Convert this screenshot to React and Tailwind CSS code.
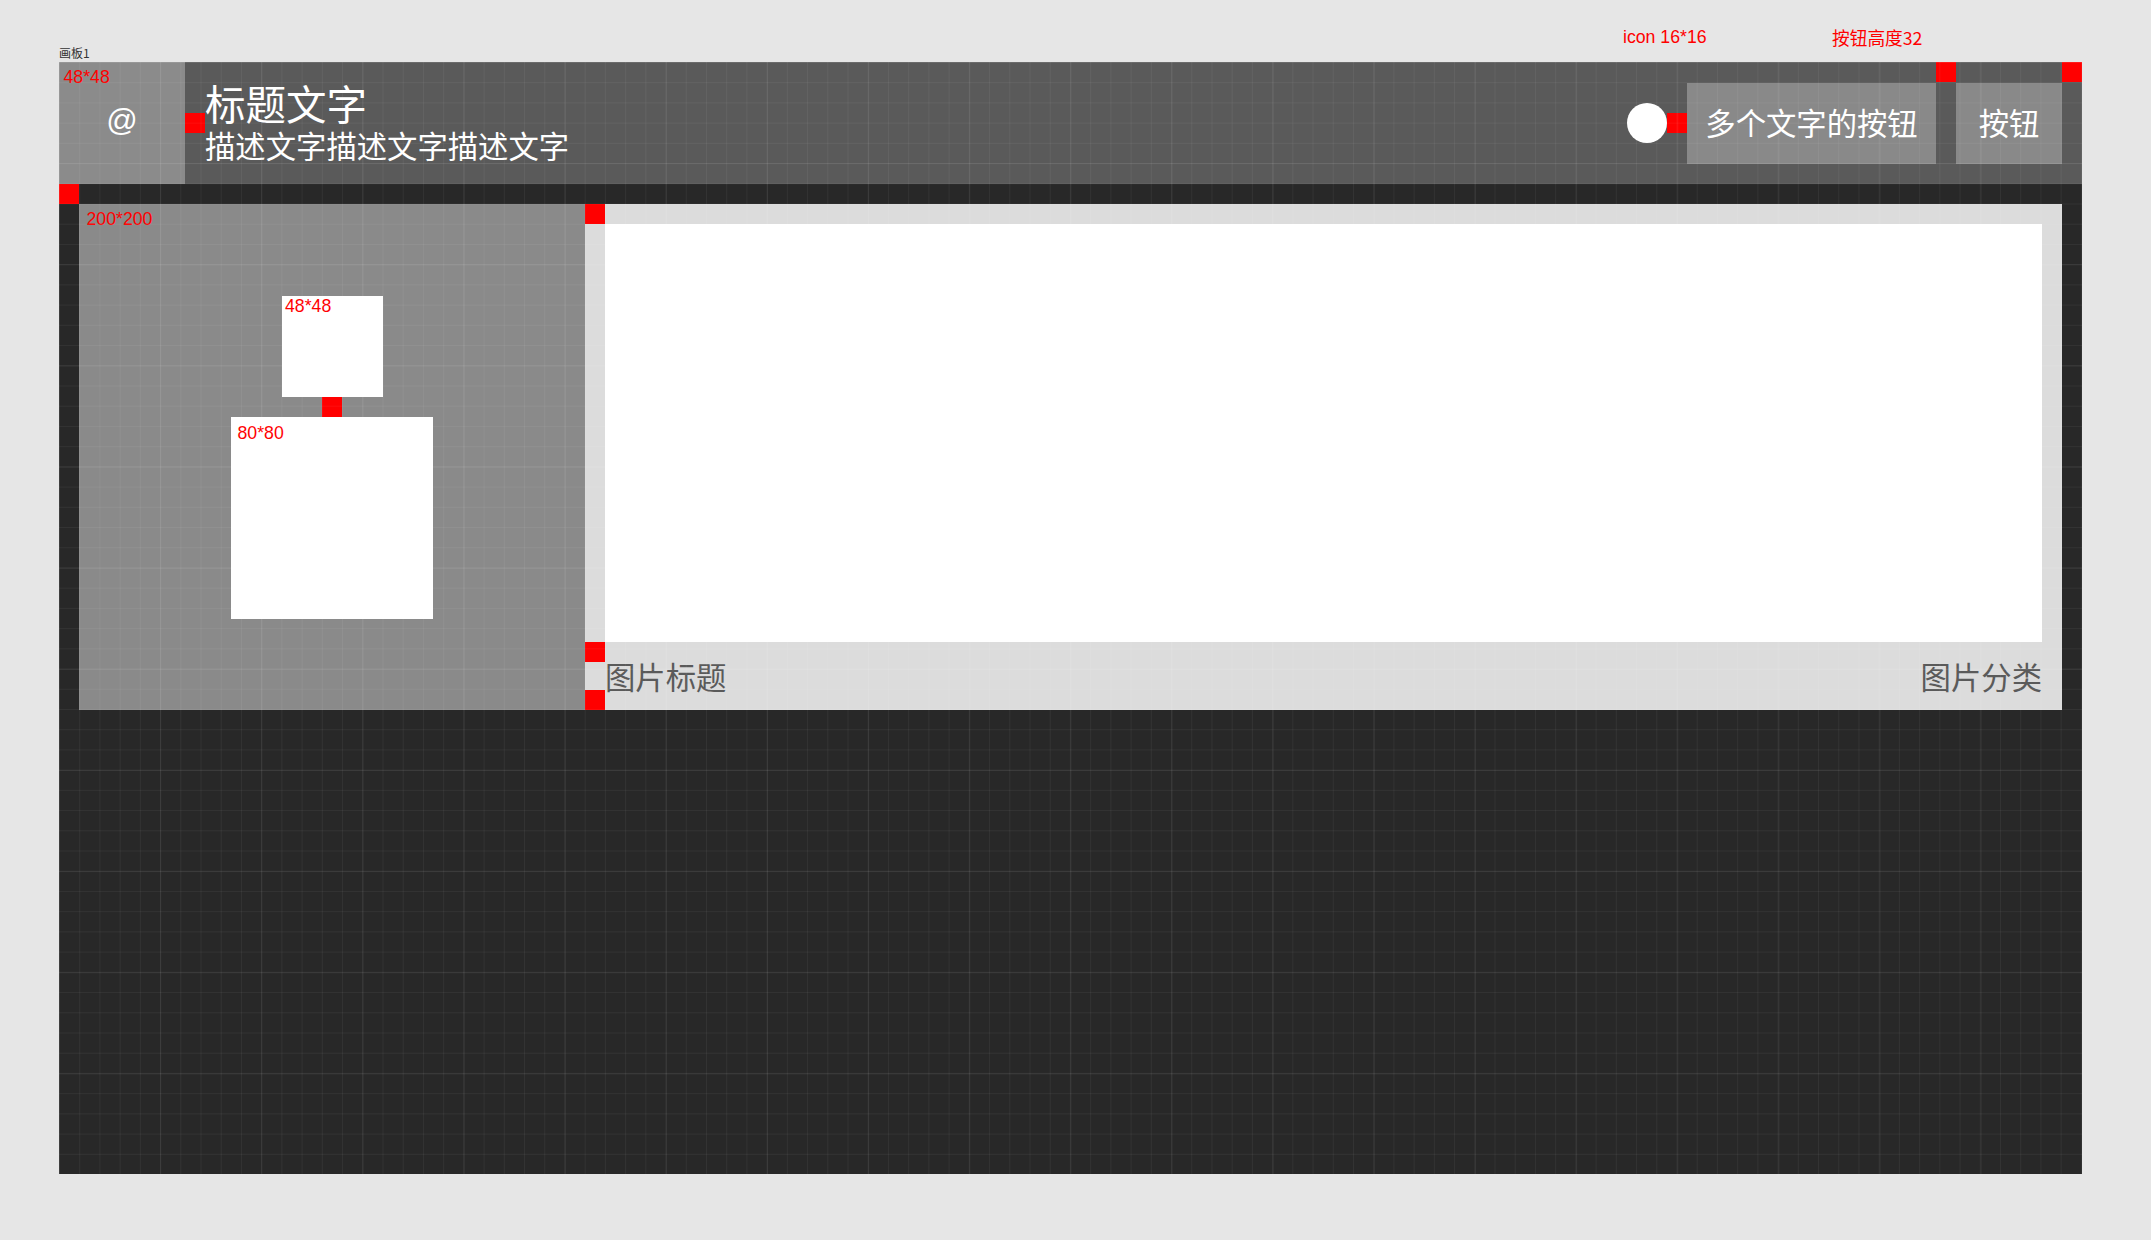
const cjk = "font-['Noto_Sans_CJK_SC',sans-serif]";
const latin = "font-['Liberation_Sans','Noto_Sans_CJK_SC',sans-serif]";

function Spacer({ className = "" }) {
  return <div className={`h-[20px] w-[20px] shrink-0 bg-[#ff0000] ${className}`} />;
}

function SizeLabel({ children, className = "" }) {
  return (
    <span className={`absolute text-[17.7px] leading-[20px] text-[#ff0000] ${latin} ${className}`}>
      {children}
    </span>
  );
}

function Header() {
  return (
    <div className="flex h-[122px] shrink-0 items-center bg-[#5a5a5a]">
      <div className="relative flex h-full w-[126px] shrink-0 items-center justify-center bg-[#8b8b8b]">
        <SizeLabel className="left-[4.5px] top-[4.6px]">48*48</SizeLabel>
        <span className={`-mt-[5px] text-[31px] leading-[31px] text-white ${latin}`}>@</span>
      </div>
      <Spacer />
      <div className={`mb-[2px] flex flex-col text-white ${cjk}`}>
        <div className="text-[40.5px] leading-[44px]">标题文字</div>
        <div className="pt-[2px] text-[30.35px] leading-[36px]">描述文字描述文字描述文字</div>
      </div>
      <div className="flex-1" />
      <div className="h-[40.5px] w-[40.5px] shrink-0 rounded-full bg-white" />
      <Spacer />
      <button
        className={`flex h-[81px] w-[249px] shrink-0 items-center justify-center bg-[#898989] text-[30.35px] text-white ${cjk}`}
      >
        多个文字的按钮
      </button>
      <Spacer className="self-start" />
      <button
        className={`flex h-[81px] w-[106px] shrink-0 items-center justify-center bg-[#898989] text-[30.35px] text-white ${cjk}`}
      >
        按钮
      </button>
      <Spacer className="self-start" />
    </div>
  );
}

function AvatarCard() {
  return (
    <div className="relative flex w-[506px] shrink-0 flex-col items-center justify-center bg-[#8a8a8a]">
      <SizeLabel className="left-[7.5px] top-[4.6px]">200*200</SizeLabel>
      <div className="relative h-[101px] w-[101px] bg-white">
        <SizeLabel className="left-[3.5px] top-[0.6px]">48*48</SizeLabel>
      </div>
      <Spacer />
      <div className="relative h-[202px] w-[202px] bg-white">
        <SizeLabel className="left-[6.5px] top-[6.6px]">80*80</SizeLabel>
      </div>
    </div>
  );
}

function ImageCard() {
  return (
    <div className="flex flex-1 bg-[#dcdcdc]">
      <div className="flex w-[20px] shrink-0 flex-col">
        <Spacer />
        <div className="flex-1" />
        <Spacer />
        <div className="h-[28px]" />
        <Spacer />
      </div>
      <div className="flex flex-1 flex-col pr-[20px]">
        <div className="h-[20px]" />
        <div className="flex-1 bg-white" />
        <div
          className={`mt-[20px] flex h-[28px] items-center justify-between text-[30.35px] leading-[28px] text-[#5a5a5a] ${cjk}`}
        >
          <span>图片标题</span>
          <span>图片分类</span>
        </div>
        <div className="h-[20px]" />
      </div>
    </div>
  );
}

export default function App() {
  return (
    <div className="relative min-h-screen w-full bg-[#e6e6e6] pb-[66px] pl-[59px] pt-[45px]">
      <span className={`absolute left-[1623px] top-[27px] text-[17.7px] leading-[20px] text-[#ff0000] ${latin}`}>
        icon 16*16
      </span>
      <span className={`absolute left-[1832px] top-[27px] text-[17.7px] leading-[20px] text-[#ff0000] ${cjk}`}>
        按钮高度32
      </span>
      <div className={`mb-[1px] text-[12px] leading-[16px] text-[#333333] ${cjk}`}>画板1</div>

      <div className="relative flex h-[1112px] w-[2023px] flex-col overflow-hidden bg-[#282828]">
        <Header />
        <div className="flex flex-1 flex-col">
          <Spacer />
          <div className="mx-[20px] flex h-[506px]">
            <AvatarCard />
            <ImageCard />
          </div>
        </div>

        {/* layout grid: 8pt minor, 40pt major */}
        <div className="pointer-events-none absolute inset-0 bg-[image:linear-gradient(to_right,rgba(255,255,255,0.06)_1px,transparent_1px),linear-gradient(to_bottom,rgba(255,255,255,0.06)_1px,transparent_1px),linear-gradient(to_right,rgba(255,255,255,0.05)_1px,transparent_1px),linear-gradient(to_bottom,rgba(255,255,255,0.05)_1px,transparent_1px)] bg-[size:101.15px_101.15px,101.15px_101.15px,20.23px_20.23px,20.23px_20.23px]" />
      </div>
    </div>
  );
}
